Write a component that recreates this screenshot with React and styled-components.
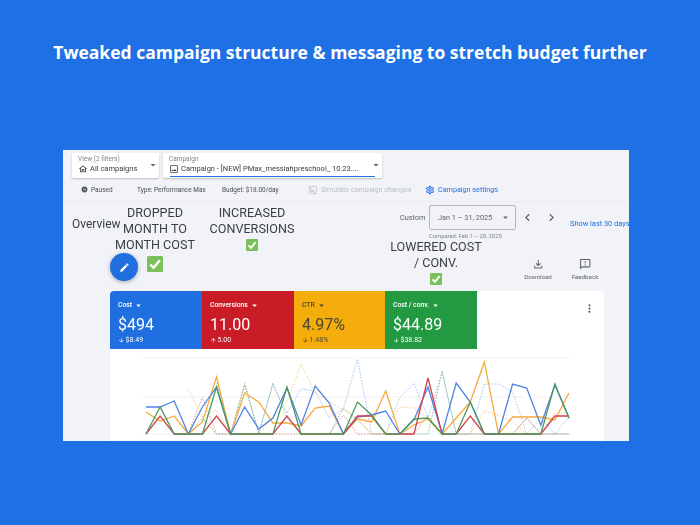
import React from 'react';
import styled, { createGlobalStyle } from 'styled-components';
import {
  MdArrowDropDown,
  MdArrowDownward,
  MdArrowUpward,
  MdChevronLeft,
  MdChevronRight,
  MdEdit,
  MdMoreVert,
  MdOutlineFeedback,
  MdOutlineFileDownload,
  MdOutlineHome,
  MdOutlineImage,
  MdOutlineImageNotSupported,
  MdOutlineSettings,
  MdPauseCircleFilled,
} from 'react-icons/md';

const GlobalStyle = createGlobalStyle`
  html, body {
    margin: 0;
    padding: 0;
    background: #1f6fe5;
  }
`;

const Page = styled.div`
  width: 700px;
  height: 525px;
  background: #1f6fe5;
  display: flex;
  flex-direction: column;
  align-items: center;
  overflow: hidden;
`;

const Title = styled.h1`
  margin: 40px 0 85px;
  height: 25px;
  line-height: 25px;
  font-family: "Open Sans", sans-serif;
  font-size: 17.5px;
  font-weight: 700;
  color: #fff;
  white-space: nowrap;
`;

const Screen = styled.section`
  position: relative;
  align-self: flex-start;
  margin-left: 63px;
  width: 566px;
  height: 291px;
  background: #f1f3f8;
  overflow: hidden;
  font-family: Roboto, sans-serif;
  color: #3c4043;
  filter: blur(0.4px);
`;

const SelectorRow = styled.div`
  display: flex;
  gap: 4px;
  padding: 3px 0 0 9px;
`;

const Selector = styled.div`
  width: ${(p) => p.$width}px;
  height: 25px;
  box-sizing: border-box;
  background: #fff;
  border-radius: 2px;
  box-shadow: 0 1px 2px rgba(60, 64, 67, 0.3);
  padding: 2px 5px 0 6px;
  position: relative;

  &::after {
    content: '';
    display: ${(p) => (p.$active ? 'block' : 'none')};
    position: absolute;
    left: 7px;
    right: 7px;
    bottom: 1px;
    height: 1px;
    background: #1f6fe5;
  }
`;

const SelectorLabel = styled.div`
  font-size: 6.5px;
  line-height: 9px;
  color: #80868b;
`;

const SelectorValue = styled.div`
  display: flex;
  align-items: center;
  gap: 2px;
  font-size: 7.5px;
  line-height: 10px;
  color: #3c4043;
  white-space: nowrap;
`;

const SelectorCaret = styled(MdArrowDropDown)`
  position: absolute;
  right: 0;
  top: 6px;
  font-size: 12px;
  color: #5f6368;
`;

const InfoRow = styled.div`
  height: 23px;
  padding: 0 0 0 18px;
  display: flex;
  align-items: center;
  border-bottom: 1px solid #e8eaed;
`;

const InfoItem = styled.span`
  display: flex;
  align-items: center;
  gap: 3px;
  width: ${(p) => p.$width}px;
  flex: none;
  white-space: nowrap;
  color: ${(p) => p.$color || '#4a4e52'};
  font-size: ${(p) => p.$size || 6.5}px;
`;

const Overview = styled.div`
  display: flex;
  height: 89px;
`;

const OverviewTitle = styled.h2`
  margin: 15px 0 0 9px;
  font-size: 12px;
  line-height: 15px;
  font-weight: 400;
  color: #3c4043;
`;

const DateArea = styled.div`
  margin-left: auto;
  width: 230px;
  display: flex;
  flex-direction: column;
  align-items: flex-start;
  padding-top: 2px;
`;

const DateRow = styled.div`
  display: flex;
  align-items: center;
  height: 26px;
  white-space: nowrap;
`;

const CustomLabel = styled.span`
  font-size: 7.3px;
  color: #5f6368;
  width: 30px;
  padding-left: 1px;
  box-sizing: border-box;
`;

const DateBox = styled.div`
  width: 87px;
  height: 25px;
  box-sizing: border-box;
  border: 1px solid #b4b7bb;
  border-radius: 2px;
  display: flex;
  align-items: center;
  justify-content: space-between;
  padding: 0 4px 0 8px;
  font-size: 7.3px;
  color: #5f6368;
`;

const Arrows = styled.div`
  display: flex;
  gap: 9px;
  margin-left: 4px;
  font-size: 15px;
  color: #5f6368;
`;

const LastDays = styled.a`
  margin: 12px 0 0 11px;
  font-size: 7.4px;
  color: #1f6fe5;
`;

const Compared = styled.div`
  margin-left: 30px;
  margin-top: 2px;
  font-size: 5.8px;
  line-height: 8px;
  color: #80868b;
`;

const Actions = styled.div`
  display: flex;
  gap: 21px;
  margin: 18px 0 0 126px;
`;

const Action = styled.div`
  width: 26px;
  display: flex;
  flex-direction: column;
  align-items: center;
  font-size: 6.2px;
  line-height: 8px;
  color: #5f6368;
  svg {
    font-size: 12.5px;
    margin-bottom: 2px;
  }
`;

const Card = styled.div`
  margin-left: 47px;
  width: 494px;
  height: 160px;
  background: #fff;
  border-radius: 4px 4px 0 0;
  overflow: hidden;
  position: relative;
`;

const Tiles = styled.div`
  display: flex;
  height: 58px;
`;

const Tile = styled.div`
  width: ${(p) => p.$width}px;
  box-sizing: border-box;
  background: ${(p) => p.$bg};
  color: ${(p) => p.$fg};
  padding: 9px 0 0 8px;
`;

const TileName = styled.div`
  display: flex;
  align-items: center;
  gap: 1px;
  font-size: 6.8px;
  line-height: 9px;
  font-weight: 500;
  svg {
    font-size: 11px;
  }
`;

const TileValue = styled.div`
  font-size: 16px;
  line-height: 20px;
  margin-top: 4px;
`;

const TileDelta = styled.div`
  display: flex;
  align-items: center;
  font-size: 7px;
  line-height: 8px;
  margin-top: 1px;
  svg {
    font-size: 6.5px;
    margin-right: 1px;
  }
`;

const Kebab = styled(MdMoreVert)`
  position: absolute;
  top: 11px;
  right: 8px;
  font-size: 13px;
  color: #5f6368;
`;

const Chart = styled.svg`
  display: block;
  width: 494px;
  height: 102px;
`;

const Note = styled.div`
  position: absolute;
  left: ${(p) => p.$x}px;
  top: ${(p) => p.$y}px;
  width: ${(p) => p.$w}px;
  display: flex;
  flex-direction: column;
  align-items: center;
  font-family: Roboto, sans-serif;
  font-size: 12.6px;
  line-height: 16px;
  color: #3b3f43;
  text-align: center;
  white-space: nowrap;
`;

const CheckMark = styled.svg`
  display: block;
  margin-top: ${(p) => p.$top}px;
`;

const Fab = styled.button`
  position: absolute;
  left: 47px;
  top: 103px;
  width: 28px;
  height: 28px;
  padding: 0;
  border: none;
  border-radius: 50%;
  background: #1f6fe0;
  color: #fff;
  font-size: 11px;
  display: flex;
  align-items: center;
  justify-content: center;
  box-shadow: 0 1px 4px rgba(60, 64, 67, 0.4);
`;

const Check = ({ size, top }) => (
  <CheckMark $top={top} width={size} height={size} viewBox="0 0 16 16">
    <rect width="16" height="16" rx="1.5" fill="#7cc05c" />
    <path d="M3.3 8.5 6.6 11.8 12.8 4.2" fill="none" stroke="#fff" strokeWidth="2.4" />
  </CheckMark>
);

const xAt = (i) => 146 + i * 14.1;
const points = (values, start = 0) =>
  values.map((y, i) => `${xAt(i + start)},${y}`).join(' ');

const solid = [
  { color: '#f7a93b', y: [412, 421, 416, 434, 422, 377, 434, 393, 402, 423, 423, 426, 408, 406, 434, 419, 422, 391, 434, 425, 419, 434, 418, 402, 362, 434, 417, 417, 417, 420, 393] },
  { color: '#4f83e3', y: [407, 407, 401, 434, 407, 387, 434, 407, 429, 418, 388, 425, 386, 403, 434, 417, 415, 411, 434, 420, 387, 434, 383, 402, 434, 434, 384, 388, 425, 385, 418] },
  { color: '#d2434a', y: [434, 416, 434, 434, 434, 416, 434, 434, 434, 434, 416, 434, 434, 434, 434, 416, 416, 434, 434, 434, 378, 434, 434, 416, 434, 434, 434, 434, 434, 416, 416] },
  { color: '#4c9a5d', y: [434, 407, 434, 434, 434, 387, 434, 434, 434, 434, 387, 434, 434, 434, 434, 402, 415, 434, 434, 419, 418, 434, 434, 402, 434, 434, 434, 434, 434, 384, 418] },
];

const dashed = [
  { color: '#fbd08f', start: 3, y: [389, 417, 410, 434, 382, 434, 418, 402, 364, 393, 402, 410, 418, 434, 434, 407, 408, 418, 434, 434, 434, 411, 415, 422, 434, 434, 413, 413] },
  { color: '#a9c4f3', start: 5, y: [383, 434, 385, 432, 385, 413, 389, 391, 418, 409, 359, 434, 434, 398, 383, 418, 372, 434, 434, 384, 384, 392, 434, 418, 434, 417] },
  { color: '#e59da0', start: 3, y: [434, 397, 434, 434, 434, 434, 434, 434, 434, 434, 434, 415, 434, 434, 434, 434, 434, 416, 434, 434, 434, 434, 434, 434, 418, 434, 434, 434] },
  { color: '#8fc09c', start: 3, y: [434, 418, 434, 434, 385, 434, 383, 418, 434, 434, 434, 408, 420, 434, 434, 434, 434, 434, 371, 434, 434, 434, 434, 434, 418, 434, 434, 434] },
];

const tiles = [
  { name: 'Cost', value: '$494', delta: '$8.49', Arrow: MdArrowDownward, bg: '#1f6fe0', fg: '#fff', width: 92 },
  { name: 'Conversions', value: '11.00', delta: '5.00', Arrow: MdArrowUpward, bg: '#c91c27', fg: '#fff', width: 92 },
  { name: 'CTR', value: '4.97%', delta: '1.48%', Arrow: MdArrowDownward, bg: '#f4ad0d', fg: '#4a4636', width: 91 },
  { name: 'Cost / conv.', value: '$44.89', delta: '$38.82', Arrow: MdArrowDownward, bg: '#239a41', fg: '#fff', width: 92 },
];

const App = () => (
  <Page>
    <GlobalStyle />
    <Title>Tweaked campaign structure &amp; messaging to stretch budget further</Title>
    <Screen>
      <SelectorRow>
        <Selector $width={87}>
          <SelectorLabel>View (2 filters)</SelectorLabel>
          <SelectorValue><MdOutlineHome size={10} />All campaigns</SelectorValue>
          <SelectorCaret />
        </Selector>
        <Selector $width={219} $active>
          <SelectorLabel>Campaign</SelectorLabel>
          <SelectorValue><MdOutlineImage size={10} />Campaign - [NEW] PMax_messiahpreschool_ 10.23....</SelectorValue>
          <SelectorCaret />
        </Selector>
      </SelectorRow>
      <InfoRow>
        <InfoItem $width={56}><MdPauseCircleFilled size={7} />Paused</InfoItem>
        <InfoItem $width={85}>Type: Performance Max</InfoItem>
        <InfoItem $width={86}>Budget: $18.00/day</InfoItem>
        <InfoItem $width={117} $color="#bdc1c6" $size={7.2}><MdOutlineImageNotSupported size={10} />Simulate campaign changes</InfoItem>
        <InfoItem $width={100} $color="#1f6fe5" $size={7.2}><MdOutlineSettings size={10} />Campaign settings</InfoItem>
      </InfoRow>
      <Overview>
        <OverviewTitle>Overview</OverviewTitle>
        <DateArea>
          <DateRow>
            <CustomLabel>Custom</CustomLabel>
            <DateBox>Jan 1 – 31, 2025<MdArrowDropDown size={11} /></DateBox>
            <Arrows><MdChevronLeft /><MdChevronRight /></Arrows>
            <LastDays>Show last 30 days</LastDays>
          </DateRow>
          <Compared>Compared: Feb 1 – 28, 2025</Compared>
          <Actions>
            <Action><MdOutlineFileDownload />Download</Action>
            <Action><MdOutlineFeedback />Feedback</Action>
          </Actions>
        </DateArea>
      </Overview>
      <Card>
        <Tiles>
          {tiles.map(({ name, value, delta, Arrow, bg, fg, width }) => (
            <Tile key={name} $bg={bg} $fg={fg} $width={width}>
              <TileName>{name}<MdArrowDropDown /></TileName>
              <TileValue>{value}</TileValue>
              <TileDelta><Arrow />{delta}</TileDelta>
            </Tile>
          ))}
        </Tiles>
        <Kebab />
        <Chart viewBox="110 349 494 102">
          {[358, 397, 434].map((y) => (
            <line key={y} x1="140" x2="571" y1={y} y2={y} stroke="#f0f1f3" strokeWidth="1" />
          ))}
          {dashed.map((s) => (
            <polyline key={s.color} points={points(s.y, s.start)} fill="none" stroke={s.color} strokeWidth="1" strokeDasharray="1.6 1.4" />
          ))}
          {solid.map((s) => (
            <polyline key={s.color} points={points(s.y)} fill="none" stroke={s.color} strokeWidth="1.3" />
          ))}
        </Chart>
      </Card>
      <Note $x={42} $y={55} $w={100}>
        DROPPED<br />MONTH TO<br />MONTH COST
        <Check size={16} top={3} />
      </Note>
      <Note $x={139} $y={55} $w={100}>
        INCREASED<br />CONVERSIONS
        <Check size={12} top={2} />
      </Note>
      <Note $x={323} $y={89} $w={100}>
        LOWERED COST<br />/ CONV.
        <Check size={12} top={2} />
      </Note>
      <Fab><MdEdit /></Fab>
    </Screen>
  </Page>
);

export default App;
